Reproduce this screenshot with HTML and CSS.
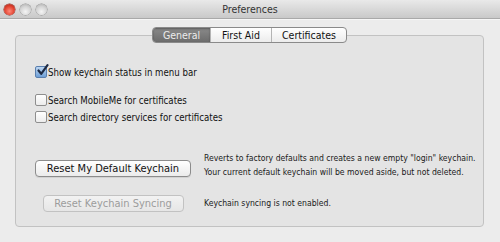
FILE: index.html
```html
<!DOCTYPE html>
<html>
<head>
<meta charset="utf-8">
<link rel="stylesheet" href="styles.css">
</head>
<body>
<div class="window">
  <div class="titlebar">
    <div class="lights">
      <span class="light red"></span>
      <span class="light gray"></span>
      <span class="light gray"></span>
    </div>
    <div class="title">Preferences</div>
  </div>
  <div class="body">
    <div class="group">
      <div class="tabs">
        <div class="tab selected">General</div>
        <div class="tab">First Aid</div>
        <div class="tab">Certificates</div>
      </div>
      <label class="check row1">
        <span class="box checked">
          <svg width="13" height="13" viewBox="0 0 13 13"><path d="M2.5 6.5 L5.2 9.8 L11.5 1.2" fill="none" stroke="#1d2a44" stroke-width="2.2" stroke-linecap="round" stroke-linejoin="round"/></svg>
        </span>
        <span class="label">Show keychain status in menu bar</span>
      </label>
      <label class="check row2">
        <span class="box"></span>
        <span class="label">Search MobileMe for certificates</span>
      </label>
      <label class="check row3">
        <span class="box"></span>
        <span class="label">Search directory services for certificates</span>
      </label>
      <div class="action act1">
        <div class="btncol"><button class="btn">Reset My Default Keychain</button></div>
        <div class="desc">Reverts to factory defaults and creates a new empty "login" keychain.<br>Your current default keychain will be moved aside, but not deleted.</div>
      </div>
      <div class="action act2">
        <div class="btncol"><button class="btn disabled">Reset Keychain Syncing</button></div>
        <div class="desc">Keychain syncing is not enabled.</div>
      </div>
    </div>
  </div>
</div>
</body>
</html>
```
FILE: styles.css
```css
* { box-sizing: border-box; }
html, body { margin: 0; padding: 0; }
body { font-family: "DejaVu Sans Condensed", "DejaVu Sans", sans-serif; font-stretch: condensed; color: #111; white-space: nowrap; }
.window { width: 500px; height: 242px; background: #ececec; overflow: hidden; }
.titlebar {
  height: 19px;
  background: linear-gradient(#e9e9e9, #c9c9c9);
  border-bottom: 1px solid #a9a9a9;
  display: flex; align-items: center; position: relative;
}
.lights { display: flex; gap: 5px; padding-left: 4px; }
.light { width: 11px; height: 11px; border-radius: 50%; display: block; }
.light.red { background: radial-gradient(circle at 50% 65%, #ff8a7a 0%, #e0402e 55%, #9a1f14 100%); box-shadow: 0 0 0 0.5px #8a2a20; }
.light.gray { background: radial-gradient(circle at 50% 70%, #f4f4f4 0%, #d4d4d4 55%, #a4a4a4 100%); box-shadow: 0 0 0 0.5px #8e8e8e; }
.title { position: absolute; left: 0; right: 0; text-align: center; font-size: 10.5px; color: #333; }
.body { border-top: 1px solid #f6f6f6; padding: 15px 16px 0 15px; }
.group {
  height: 192px; width: 469px;
  background: #e4e4e4; border: 1px solid #c2c2c2; border-radius: 4px;
  padding-left: 19px;
}
.tabs {
  display: flex; width: 195px; height: 16px; margin: -9px 0 0 117px;
  border: 1px solid #8a8a8a; border-radius: 4px; overflow: hidden;
  background: linear-gradient(#ffffff, #ececec);
  font-size: 10.5px;
}
.tab { flex: none; display: flex; align-items: center; justify-content: center; border-left: 1px solid #b4b4b4; }
.tab:first-child { border-left: none; }
.tab.selected { width: 57px; background: linear-gradient(#8a8a8a, #6c6c6c); color: #ececec; box-shadow: inset 0 1px 2px rgba(0,0,0,0.35); }
.tab:nth-child(2) { width: 61px; }
.tab:nth-child(3) { flex: 1; }
.check { display: flex; align-items: center; height: 16px; font-size: 9.6px; }
.row1 { margin-top: 21px; }
.row2 { margin-top: 12px; }
.row3 { margin-top: 1px; }
.box {
  width: 12px; height: 12px; margin-right: 1px; border-radius: 2px;
  border: 1px solid #8e8e8e; background: linear-gradient(#ffffff, #ececec);
  position: relative; flex: none;
}
.box.checked { background: linear-gradient(#bcd6f2, #6e9fd6); border-color: #5a7fae; }
.box svg { position: absolute; left: 0; top: -3px; }
.action { display: flex; align-items: flex-start; }
.act1 { margin-top: 26px; }
.act2 { margin-top: 16px; }
.btncol { width: 156px; flex: none; display: flex; justify-content: center; }
.btn {
  font-family: inherit; font-stretch: condensed; font-size: 11px; color: #111;
  height: 17px; padding: 0; border-radius: 4px; white-space: nowrap;
  border: 1px solid #8c8c8c; background: linear-gradient(#ffffff, #ebebeb);
  box-shadow: 0 1px 0 rgba(0,0,0,0.08);
}
.act1 .btn { width: 156px; margin-top: 9px; }
.act2 .btn { width: 141px; }
.btn.disabled { color: #9c9c9c; border-color: #c2c2c2; background: linear-gradient(#f2f2f2, #e6e6e6); box-shadow: none; }
.desc { font-size: 8.6px; line-height: 14px; color: #1a1a1a; margin-left: 13px; }
.act2 .desc { margin-top: 1px; }
```
